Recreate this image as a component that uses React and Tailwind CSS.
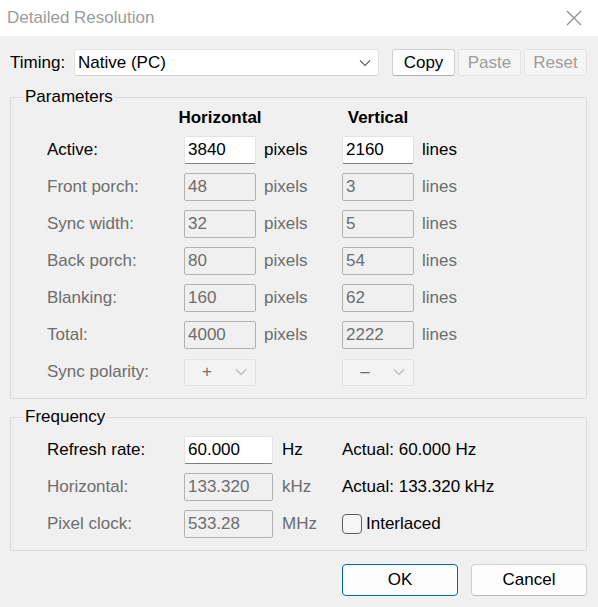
import React from 'react';

const font = { fontFamily: '"Liberation Sans", Arial, sans-serif' };

const Chevron = ({ color = '#5f5f5f' }) => (
  <svg width="12" height="8" viewBox="0 0 12 8" fill="none">
    <path d="M1 1.5l5 5 5-5" stroke={color} strokeWidth="1.1" />
  </svg>
);

const Field = ({ value, enabled, width = 'w-[72px]' }) => (
  <div
    className={`${width} h-[28px] flex items-center pl-[3px] rounded-[2px] border ${
      enabled
        ? 'bg-white border-[#e3e3e3] border-b-[#808080] text-black'
        : 'bg-[#f0f0f0] border-[#b2b2b2] text-[#6d6d6d]'
    }`}
  >
    {value}
  </div>
);

const paramRows = [
  { label: 'Active:', h: '3840', v: '2160', enabled: true },
  { label: 'Front porch:', h: '48', v: '3' },
  { label: 'Sync width:', h: '32', v: '5' },
  { label: 'Back porch:', h: '80', v: '54' },
  { label: 'Blanking:', h: '160', v: '62' },
  { label: 'Total:', h: '4000', v: '2222' },
];

const Polarity = ({ sign }) => (
  <div className="w-[72px] h-[27px] flex items-center justify-between pl-[17px] pr-[8px] rounded-[2px] border border-[#e2e2e2] bg-[#f3f3f3] text-[#6d6d6d]">
    <span className="w-[10px] text-center">{sign}</span>
    <Chevron color="#b5b5b5" />
  </div>
);

const Group = ({ title, children }) => (
  <fieldset className="border border-[#dcdcdc] rounded-[1px] pl-[36px] pb-[12px]">
    <legend className="ml-[-24px] px-[2px] leading-[20px] text-black">{title}</legend>
    {children}
  </fieldset>
);

export default function App() {
  const dim = 'text-[#6d6d6d]';
  return (
    <div className="w-[598px] h-[607px] bg-[#f0f0f0] flex flex-col text-[17px]" style={font}>
      {/* Title bar */}
      <div className="h-[36px] bg-white flex items-center justify-between pl-[7px] pr-[16px] shrink-0">
        <span className="text-[#9b9b9b]">Detailed Resolution</span>
        <svg width="16" height="16" viewBox="0 0 16 16" fill="none">
          <path d="M1 1l14 14M15 1L1 15" stroke="#8c8c8c" strokeWidth="1.2" />
        </svg>
      </div>

      <div className="flex flex-col pl-[10px] pr-[11px]">
        {/* Timing */}
        <div className="flex items-center mt-[13px] h-[27px]">
          <span className="w-[64px]">Timing:</span>
          <div className="w-[305px] h-[27px] flex items-center justify-between pl-[3px] pr-[7px] bg-white border border-[#e3e3e3] border-b-[#d0d0d0] rounded-[3px]">
            <span>Native (PC)</span>
            <Chevron />
          </div>
          <button className="ml-[13px] w-[63px] h-[27px] rounded-[3px] border border-[#d0d0d0] border-b-[#b0b0b0] bg-[#fdfdfd] text-black">
            Copy
          </button>
          <button className="ml-[3px] w-[63px] h-[27px] rounded-[3px] border border-[#e3e3e3] bg-[#f5f5f5] text-[#9d9d9d]">
            Paste
          </button>
          <button className="ml-[3px] w-[63px] h-[27px] rounded-[3px] border border-[#e3e3e3] bg-[#f5f5f5] text-[#9d9d9d]">
            Reset
          </button>
        </div>

        {/* Parameters */}
        <div className="mt-[11px]">
          <Group title="Parameters">
            <div className="flex h-[22px] items-center">
              <span className="w-[137px]" />
              <span className="w-[72px] flex justify-center font-bold whitespace-nowrap">Horizontal</span>
              <span className="w-[86px]" />
              <span className="w-[72px] flex justify-center font-bold whitespace-nowrap">Vertical</span>
            </div>
            <div className="flex flex-col gap-[9px] mt-[7px]">
              {paramRows.map((r) => (
                <div key={r.label} className="flex items-center h-[28px]">
                  <span className={`w-[137px] ${r.enabled ? 'text-black' : dim}`}>{r.label}</span>
                  <Field value={r.h} enabled={r.enabled} />
                  <span className={`w-[86px] pl-[8px] ${r.enabled ? 'text-black' : dim}`}>pixels</span>
                  <Field value={r.v} enabled={r.enabled} />
                  <span className={`pl-[8px] ${r.enabled ? 'text-black' : dim}`}>lines</span>
                </div>
              ))}
              <div className="flex items-center h-[28px]">
                <span className={`w-[137px] ${dim}`}>Sync polarity:</span>
                <Polarity sign="+" />
                <span className="w-[86px]" />
                <Polarity sign="–" />
              </div>
            </div>
          </Group>
        </div>

        {/* Frequency */}
        <div className="mt-[8px]">
          <Group title="Frequency">
            <div className="flex flex-col gap-[9px] mt-[9px]">
              <div className="flex items-center h-[28px]">
                <span className="w-[137px]">Refresh rate:</span>
                <Field value="60.000" enabled width="w-[89px]" />
                <span className="w-[69px] pl-[9px]">Hz</span>
                <span>Actual: 60.000 Hz</span>
              </div>
              <div className="flex items-center h-[28px]">
                <span className={`w-[137px] ${dim}`}>Horizontal:</span>
                <Field value="133.320" width="w-[89px]" />
                <span className={`w-[69px] pl-[9px] ${dim}`}>kHz</span>
                <span>Actual: 133.320 kHz</span>
              </div>
              <div className="flex items-center h-[28px]">
                <span className={`w-[137px] ${dim}`}>Pixel clock:</span>
                <Field value="533.28" width="w-[89px]" />
                <span className={`w-[69px] pl-[9px] ${dim}`}>MHz</span>
                <span className="w-[20px] h-[20px] rounded-[4px] border border-[#5d5d5d] bg-[#f6f6f6]" />
                <span className="ml-[4px]">Interlaced</span>
              </div>
            </div>
          </Group>
        </div>

        {/* Buttons */}
        <div className="flex justify-end gap-[13px] mt-[13px]">
          <button className="w-[116px] h-[32px] rounded-[4px] border border-[#0067c0] bg-[#fdfdfd] text-black">
            OK
          </button>
          <button className="w-[116px] h-[32px] rounded-[4px] border border-[#d0d0d0] border-b-[#b8b8b8] bg-[#fdfdfd] text-black">
            Cancel
          </button>
        </div>
      </div>
    </div>
  );
}
